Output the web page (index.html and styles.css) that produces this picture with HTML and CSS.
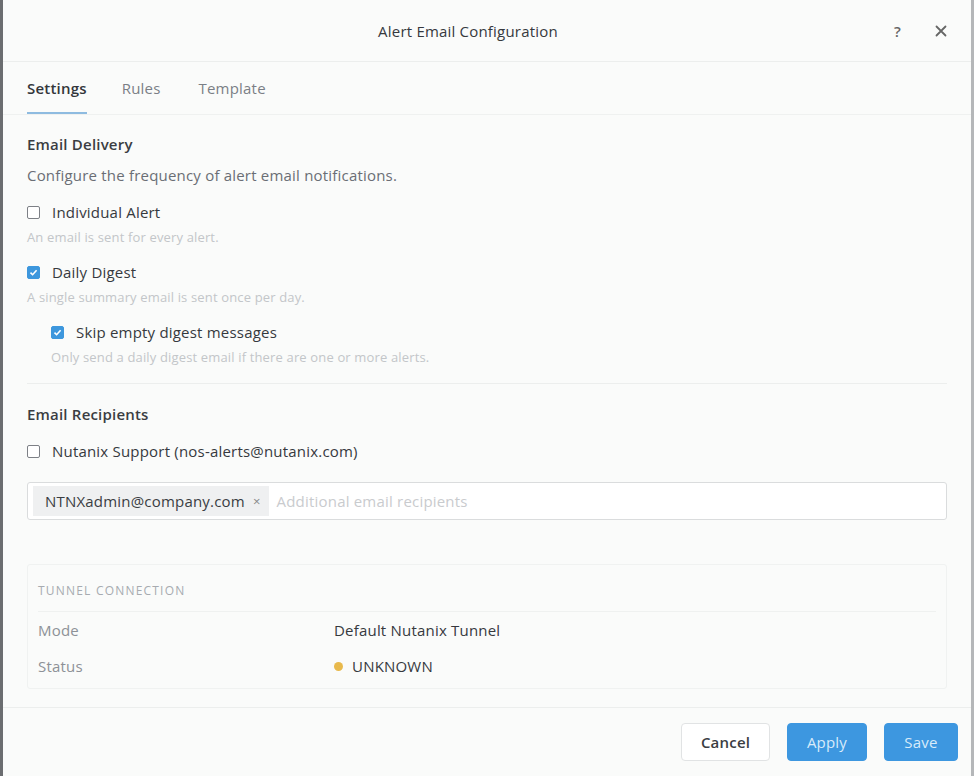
FILE: index.html
```html
<!DOCTYPE html>
<html>
<head>
<meta charset="utf-8">
<link rel="stylesheet" href="styles.css">
</head>
<body>
<div class="dialog">
  <div class="header">
    <div class="title">Alert Email Configuration</div>
    <div class="header-actions">
      <span class="help">?</span>
      <svg class="close" width="12" height="12" viewBox="0 0 12 12"><path d="M1.5 1.5 L10.5 10.5 M10.5 1.5 L1.5 10.5" stroke="#666" stroke-width="1.8" stroke-linecap="round"/></svg>
    </div>
  </div>
  <div class="tabs">
    <div class="tab active">Settings</div>
    <div class="tab">Rules</div>
    <div class="tab">Template</div>
  </div>
  <div class="body">
    <div class="section-title">Email Delivery</div>
    <div class="desc">Configure the frequency of alert email notifications.</div>
    <div class="option">
      <span class="cb"></span><span class="label">Individual Alert</span>
    </div>
    <div class="help-text">An email is sent for every alert.</div>
    <div class="option">
      <span class="cb checked"><svg width="9" height="9" viewBox="0 0 9 9"><path d="M1.5 4.6 L3.6 6.7 L7.6 2.2" fill="none" stroke="#fff" stroke-width="1.6"/></svg></span><span class="label">Daily Digest</span>
    </div>
    <div class="help-text">A single summary email is sent once per day.</div>
    <div class="sub">
      <div class="option">
        <span class="cb checked"><svg width="9" height="9" viewBox="0 0 9 9"><path d="M1.5 4.6 L3.6 6.7 L7.6 2.2" fill="none" stroke="#fff" stroke-width="1.6"/></svg></span><span class="label">Skip empty digest messages</span>
      </div>
      <div class="help-text">Only send a daily digest email if there are one or more alerts.</div>
    </div>
    <div class="divider"></div>
    <div class="section-title recip">Email Recipients</div>
    <div class="option support">
      <span class="cb"></span><span class="label">Nutanix Support (nos-alerts@nutanix.com)</span>
    </div>
    <div class="email-input">
      <span class="tag">NTNXadmin@company.com <span class="tag-x">×</span></span>
      <span class="placeholder">Additional email recipients</span>
    </div>
    <div class="tunnel">
      <div class="tunnel-head">TUNNEL CONNECTION</div>
      <div class="tunnel-row"><span class="key">Mode</span><span class="val">Default Nutanix Tunnel</span></div>
      <div class="tunnel-row"><span class="key">Status</span><span class="val"><span class="dot"></span>UNKNOWN</span></div>
    </div>
  </div>
  <div class="footer">
    <button class="btn cancel">Cancel</button>
    <button class="btn primary">Apply</button>
    <button class="btn primary">Save</button>
  </div>
</div>
</body>
</html>
```
FILE: styles.css
```css
html, body {
  margin: 0;
  padding: 0;
  background: #fafbfa;
}
body {
  font-family: "Open Sans", Lato, sans-serif;
  color: #3a3d42;
  letter-spacing: 0.2px;
}
.dialog {
  width: 974px;
  height: 776px;
  box-sizing: border-box;
  border-left: 3px solid #6b6d70;
  border-right: 3px solid #b5b7b9;
  background: #fafbfa;
  display: flex;
  flex-direction: column;
}
.header {
  height: 62px;
  flex: none;
  display: flex;
  align-items: center;
  justify-content: center;
  position: relative;
  border-bottom: 1px solid #eceeed;
  box-sizing: border-box;
  padding-right: 38px;
}
.title {
  font-size: 15px;
  color: #36393e;
}
.header-actions {
  position: absolute;
  right: 24px;
  top: 0;
  height: 62px;
  display: flex;
  align-items: center;
  gap: 34px;
}
.help {
  font-size: 15px;
  color: #666;
  font-weight: 600;
}
.close { display: block; }
.tabs {
  height: 53px;
  flex: none;
  display: flex;
  padding-left: 24px;
  border-bottom: 1px solid #eff1f0;
  box-sizing: border-box;
}
.tab {
  font-size: 15px;
  color: #7b7f86;
  padding-top: 16px;
  margin-right: 35px;
  box-sizing: border-box;
  height: 52px;
}
.tab.active {
  color: #33363b;
  font-weight: 600;
  border-bottom: 2px solid #8ebbe0;
}
.tab:nth-child(2) { margin-right: 38px; }
.body {
  flex: 1;
  padding: 20px 24px 0 24px;
}
.section-title {
  font-size: 15px;
  font-weight: 600;
  color: #3a3d42;
  line-height: 18px;
}
.desc {
  font-size: 15px;
  color: #6a6e75;
  margin-top: 13px;
  line-height: 18px;
}
.option {
  display: flex;
  align-items: center;
  margin-top: 19px;
  height: 18px;
}
.cb {
  width: 11px;
  height: 11px;
  border: 1.5px solid #7d8086;
  border-radius: 2px;
  margin-right: 12px;
  display: flex;
  align-items: center;
  justify-content: center;
  background: #fff;
  flex: none;
}
.cb.checked {
  background: #3d97dd;
  border-color: #3d97dd;
}
.label {
  font-size: 15px;
  color: #36393e;
}
.help-text {
  font-size: 13px;
  letter-spacing: 0.15px;
  color: #c3c6c9;
  margin-top: 9px;
  line-height: 15px;
}
.help-text + .option { margin-top: 18px; }
.sub {
  padding-left: 24px;
  margin-top: 18px;
}
.sub .option { margin-top: 0; }
.divider {
  height: 1px;
  background: #eceeed;
  margin-top: 18px;
}
.section-title.recip {
  margin-top: 21px;
}
.option.support {
  margin-top: 19px;
}
.email-input {
  margin-top: 22px;
  height: 38px;
  box-sizing: border-box;
  border: 1px solid #dadcdd;
  border-radius: 3px;
  background: #fff;
  display: flex;
  align-items: center;
  padding-left: 5px;
}
.tag {
  background: #eff0f1;
  height: 30px;
  display: flex;
  align-items: center;
  padding: 0 8px 0 12px;
  font-size: 15px;
  color: #3a3d42;
  gap: 8px;
}
.tag-x {
  color: #888;
  font-size: 13px;
}
.placeholder {
  font-size: 15px;
  color: #c9cbce;
  margin-left: 8px;
}
.tunnel {
  margin-top: 44px;
  border: 1px solid #f0f2f1;
  border-radius: 3px;
  padding: 0 10px 4px 10px;
  background: #fafbfa;
}
.tunnel-head {
  font-size: 12px;
  color: #a7abb0;
  letter-spacing: 1.2px;
  padding: 17px 0 12px 0;
  border-bottom: 1px solid #eff1f0;
}
.tunnel-row {
  display: flex;
  align-items: center;
  height: 36px;
  font-size: 15px;
}
.key {
  width: 296px;
  color: #8d9197;
}
.val {
  color: #36393e;
  display: flex;
  align-items: center;
}
.dot {
  width: 9px;
  height: 9px;
  border-radius: 50%;
  background: #e8b94c;
  margin-right: 9px;
}
.footer {
  height: 68px;
  flex: none;
  border-top: 1px solid #eceeed;
  display: flex;
  align-items: center;
  justify-content: flex-end;
  padding-right: 13px;
  gap: 17px;
}
.btn {
  font-family: "Open Sans", Lato, sans-serif;
  font-size: 15px;
  letter-spacing: 0.2px;
  height: 38px;
  border-radius: 4px;
  padding: 0;
  cursor: pointer;
}
.btn.cancel {
  width: 89px;
  background: #fff;
  border: 1px solid #e1e3e4;
  color: #3a3d42;
  font-weight: 600;
}
.btn.primary {
  background: #3d97e0;
  border: 1px solid #3d97e0;
  color: #d8ebfa;
  width: 80px;
}
.btn.primary:last-child { width: 74px; }
```
